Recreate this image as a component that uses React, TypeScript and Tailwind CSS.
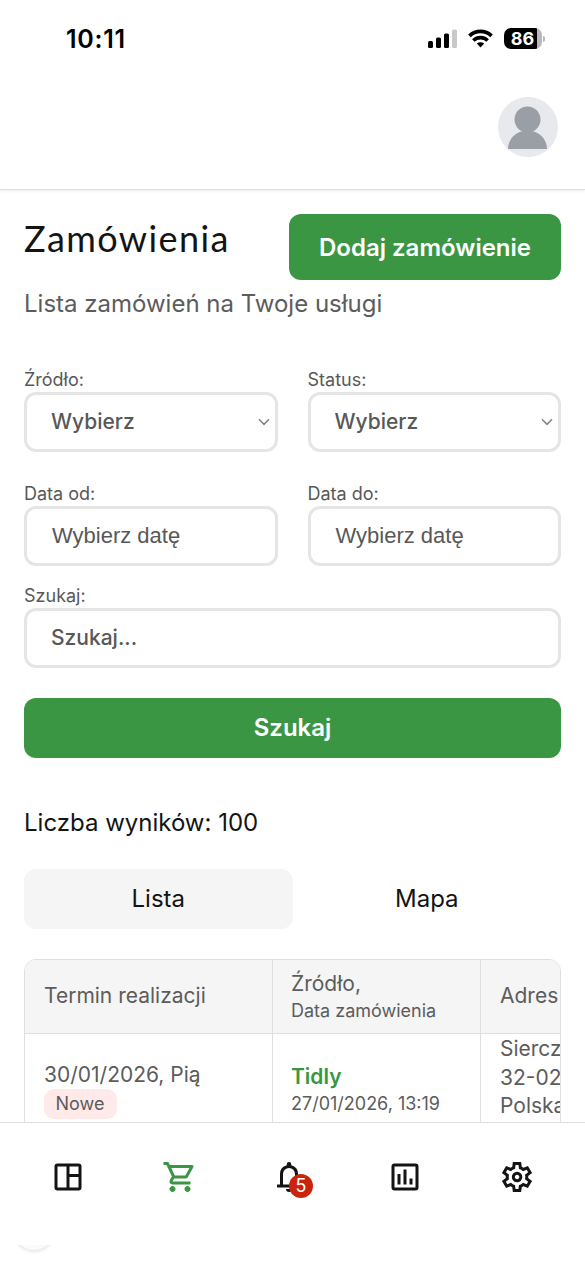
import React from 'react';

interface FieldProps {
    label: string;
    children: React.ReactNode;
}

interface NavIconProps {
    children: React.ReactNode;
    active?: boolean;
    badge?: number;
}

const SignalIcon = () => (
    <svg width="29" height="20" viewBox="0 0 29 20" fill="#000">
        <rect x="0" y="12" width="5" height="7" rx="1.5" />
        <rect x="8" y="8.5" width="5" height="10.5" rx="1.5" />
        <rect x="16" y="4.5" width="5" height="14.5" rx="1.5" />
        <rect x="24" y="0.5" width="5" height="18.5" rx="1.5" fill="#c8c8c8" />
    </svg>
);

const WifiIcon = () => (
    <svg width="25" height="20" viewBox="0 0 26 20" fill="none" stroke="#000" strokeWidth="3.8">
        <path d="M1.5 6.7a16.5 16.5 0 0 1 23 0" />
        <path d="M5.6 11.6a10.6 10.6 0 0 1 14.8 0" />
        <path d="M13 18.8l-3.8-4a5.6 5.6 0 0 1 7.600 0z" fill="#000" stroke="none" />
    </svg>
);

const Field: React.FC<FieldProps> = ({ label, children }) => (
    <label className="flex flex-col pt-0.5 text-[18px] leading-6 text-[#585858]">
        {label}
        {children}
    </label>
);

const Box: React.FC<{ children: React.ReactNode; className: string }> = ({ children, className }) => (
    <span
        className={`flex h-[60px] items-center justify-between rounded-xl border-3 border-[#e5e5e5]
            pr-[5px] pb-px text-[#585858] ${className}`}
    >
        {children}
    </span>
);

const Chevron = () => (
    <svg width="12" height="8" viewBox="0 0 12 8" fill="none" stroke="#858585" strokeWidth="1.6">
        <path d="M1 1.3l5 5 5-5" />
    </svg>
);

const NavIcon: React.FC<NavIconProps> = ({ children, active, badge }) => (
    <button
        className={`flex size-9 items-center justify-center ${active ? 'text-[#3a9643]' : 'text-[#141414]'} ${
            badge ? 'relative -left-[3.5px]' : ''
        }`}
    >
        <svg width="36" height="36" viewBox="0 0 24 24" fill="currentColor">
            {children}
        </svg>
        {badge && (
            <span className="absolute top-[15px] left-[18px] flex size-6 items-center justify-center rounded-full bg-[#cb240c] text-[18px] leading-none text-white">
                {badge}
            </span>
        )}
    </button>
);

export default function App() {
    return (
        <div className="flex h-screen w-full flex-col overflow-hidden bg-white font-['Inter',sans-serif]">
            <header className="flex h-[190px] shrink-0 flex-col border-b border-[#dedede] shadow-[0_1px_3px_rgba(0,0,0,0.08)]">
                <div className="flex items-start justify-between pt-[24px] pr-[40px] pl-[66px]">
                    <span className="text-[25px] leading-[30px] font-semibold tracking-[0.7px] text-black">10:11</span>
                    <div className="flex items-center gap-[11px] pt-1">
                        <SignalIcon />
                        <WifiIcon />
                        <div className="flex items-center gap-px">
                            <span className="flex h-[21px] w-[38px] items-center justify-center rounded-[7px] bg-[linear-gradient(90deg,#000_86%,#b9b9b9_86%)] pr-[1px] text-[18px] leading-none font-bold text-white">
                                86
                            </span>
                            <span className="h-[6px] w-[2px] rounded-r-full bg-[#b9b9b9]" />
                        </div>
                    </div>
                </div>
                <div className="mt-[43px] flex justify-end pr-[27px]">
                    <svg width="60" height="60" viewBox="0 0 60 60">
                        <circle cx="30" cy="30" r="30" fill="#e7e9ec" />
                        <circle cx="29.5" cy="22.5" r="13" fill="#9a9fa5" />
                        <path d="M10 52c0-10 8-18.500 19.500-18.500S49 42 49 52z" fill="#9a9fa5" />
                    </svg>
                </div>
            </header>

            <main className="min-h-0 flex-1 overflow-hidden px-6 pt-[24px]">
                <div className="flex items-start justify-between">
                    <h1 className="font-['Lato',sans-serif] text-[36px] leading-[49px] tracking-[1.4px] text-[#141414]">
                        Zamówienia
                    </h1>
                    <button className="h-[66px] w-[272px] rounded-xl bg-[#3a9643] pt-[2px] text-2xl font-semibold text-white">
                        Dodaj zamówienie
                    </button>
                </div>
                <p className="mt-1.5 text-2xl leading-9 text-[#5c5c5c]">Lista zamówień na Twoje usługi</p>

                <div className="mt-[44px] grid grid-cols-2 gap-x-[30px] gap-y-[28px]">
                    <Field label="Źródło:">
                        <Box className="pl-6 text-[21px] font-medium">
                            Wybierz
                            <Chevron />
                        </Box>
                    </Field>
                    <Field label="Status:">
                        <Box className="pl-6 text-[21px] font-medium">
                            Wybierz
                            <Chevron />
                        </Box>
                    </Field>
                    <Field label="Data od:">
                        <Box className="pl-[25px] font-['Liberation_Sans',sans-serif] text-[22px]">Wybierz datę</Box>
                    </Field>
                    <Field label="Data do:">
                        <Box className="pl-[25px] font-['Liberation_Sans',sans-serif] text-[22px]">Wybierz datę</Box>
                    </Field>
                </div>
                <div className="mt-4">
                    <Field label="Szukaj:">
                        <Box className="pl-6 text-[21px] font-medium">Szukaj...</Box>
                    </Field>
                </div>
                <button className="mt-[30px] block h-[60px] w-full rounded-xl bg-[#3a9643] text-2xl font-semibold text-white">
                    Szukaj
                </button>

                <p className="mt-[47px] text-2xl leading-9 text-[#141414]">Liczba wyników: 100</p>
                <div className="mt-[28px] grid grid-cols-2 text-2xl text-[#141414]">
                    <button className="h-[60px] rounded-xl bg-[#f5f5f5]">Lista</button>
                    <button className="h-[60px] rounded-xl">Mapa</button>
                </div>

                <div className="mt-[30px] h-[220px] overflow-hidden rounded-t-xl border border-[#dfdfdf] text-[#5c5c5c]">
                    <div className="grid w-[800px] grid-cols-[248px_208px_1fr] divide-x divide-[#dfdfdf]">
                        <div className="flex h-[74px] items-center border-b border-[#dfdfdf] bg-[#f5f5f5] pb-px pl-[19px] text-[21px]">
                            Termin realizacji
                        </div>
                        <div className="flex h-[74px] flex-col justify-center border-b border-[#dfdfdf] bg-[#f5f5f5] pb-px pl-[18px]">
                            <span className="text-[21px] leading-7">Źródło,</span>
                            <span className="text-[18px] leading-[25px]">Data zamówienia</span>
                        </div>
                        <div className="flex h-[74px] items-center border-b border-[#dfdfdf] bg-[#f5f5f5] pb-px pl-[19px] text-[21px]">
                            Adres
                        </div>
                        <div className="flex h-[144px] flex-col items-start pt-[26px] pl-[19px]">
                            <span className="text-[21px] leading-[29px]">30/01/2026, Pią</span>
                            <span className="flex h-[30px] w-[73px] items-center justify-center rounded-[10px] bg-[#ffe9e9] pr-px pb-px text-[18px]">
                                Nowe
                            </span>
                        </div>
                        <div className="flex h-[144px] flex-col pt-[29px] pl-[18px]">
                            <span className="text-[21px] leading-[28px] font-semibold text-[#3a9643]">Tidly</span>
                            <span className="text-[18px] leading-[25px]">27/01/2026, 13:19</span>
                        </div>
                        <div className="flex h-[144px] flex-col pt-[1px] pl-[19px] text-[21px] leading-[28.5px]">
                            <span>Siercza</span>
                            <span>32-020</span>
                            <span>Polska</span>
                        </div>
                    </div>
                </div>
            </main>

            <nav className="z-10 h-[144px] shrink-0 border-t border-[#dfdfdf] bg-white pt-[36px]">
                <div className="flex justify-between px-[50px]">
                    <NavIcon>
                        <path d="M19 3H5a2 2 0 0 0-2 2v14a2 2 0 0 0 2 2h14a2 2 0 0 0 2-2V5a2 2 0 0 0-2-2zM5 5h6v14H5zm14 14h-6v-7h6zm0-9h-6V5h6z" />
                    </NavIcon>
                    <NavIcon active>
                        <path d="M15.550 13c.75 0 1.410-.41 1.750-1.030l3.580-6.490A.996.996 0 0 0 20.010 4H5.210l-.94-2H1v2h2l3.600 7.590-1.350 2.440C4.520 15.370 5.480 17 7 17h12v-2H7l1.100-2h7.450zM6.160 6h12.150l-2.760 5H8.530L6.160 6zM7 18c-1.100 0-1.990.9-1.990 2S5.900 22 7 22s2-.9 2-2-.9-2-2-2zm10 0c-1.100 0-1.990.9-1.990 2s.89 2 1.990 2 2-.9 2-2-.9-2-2-2z" />
                    </NavIcon>
                    <NavIcon badge={5}>
                        <path d="M4 19v-2h2v-7a6 6 0 0 1 4.500-5.800v-.7a1.500 1.500 0 0 1 3 0v.7A6 6 0 0 1 18 10v7h2v2zm8 3a2 2 0 0 1-2-2h4a2 2 0 0 1-2 2zM8 17h8v-7a4 4 0 0 0-8 0z" />
                    </NavIcon>
                    <NavIcon>
                        <path d="M19 3H5a2 2 0 0 0-2 2v14a2 2 0 0 0 2 2h14a2 2 0 0 0 2-2V5a2 2 0 0 0-2-2zm0 16H5V5h14zM7 10h2v7H7zm4-3h2v10h-2zm4 6h2v4h-2z" />
                    </NavIcon>
                    <NavIcon>
                        <path d="M9.250 22l-.4-3.200q-.325-.125-.612-.3-.288-.175-.563-.375L4.700 19.375l-2.750-4.750 2.575-1.950Q4.500 12.500 4.500 12.337v-.675q0-.162.025-.337L1.950 9.375l2.750-4.750 2.975 1.250q.275-.2.575-.375.300-.175.600-.3l.4-3.200h5.500l.4 3.200q.325.125.613.300.287.175.562.375l2.975-1.250 2.750 4.750-2.575 1.950q.025.175.025.337v.675q0 .163-.05.338l2.575 1.950-2.750 4.750-2.950-1.250q-.275.2-.575.375-.3.175-.6.3l-.4 3.200zM11 20h1.975l.35-2.650q.775-.2 1.438-.588.662-.387 1.212-.937l2.475 1.025.975-1.700-2.150-1.625q.125-.35.175-.737.05-.388.05-.788t-.05-.787q-.05-.388-.175-.738l2.150-1.625-.975-1.700-2.475 1.050q-.55-.575-1.212-.963-.663-.387-1.438-.587L13 4h-1.975l-.35 2.650q-.775.2-1.437.587-.663.388-1.213.938L5.550 7.150l-.975 1.700 2.150 1.600q-.125.375-.175.750-.05.375-.05.800 0 .4.050.775.050.375.175.750l-2.150 1.625.975 1.700 2.475-1.050q.55.575 1.213.962.662.388 1.437.588zm1.050-4.500q1.450 0 2.475-1.025Q15.550 13.450 15.550 12q0-1.450-1.025-2.475Q13.500 8.500 12.050 8.500q-1.475 0-2.488 1.025Q8.550 10.550 8.550 12q0 1.450 1.012 2.475Q10.575 15.500 12.050 15.500zm0-2q-.625 0-1.063-.438Q10.550 12.625 10.550 12t.437-1.063Q11.425 10.500 12.050 10.500t1.062.437q.438.438.438 1.063t-.438 1.062q-.437.438-1.062.438z" />
                    </NavIcon>
                </div>
                <div className="mt-[50px] ml-[14px] flex h-3 w-10 items-end justify-center overflow-hidden pb-[7px]">
                    <span className="size-10 shrink-0 rounded-full bg-[#f7fdfc] shadow-[0_1px_4px_rgba(0,0,0,0.14)]" />
                </div>
            </nav>
        </div>
    );
}
